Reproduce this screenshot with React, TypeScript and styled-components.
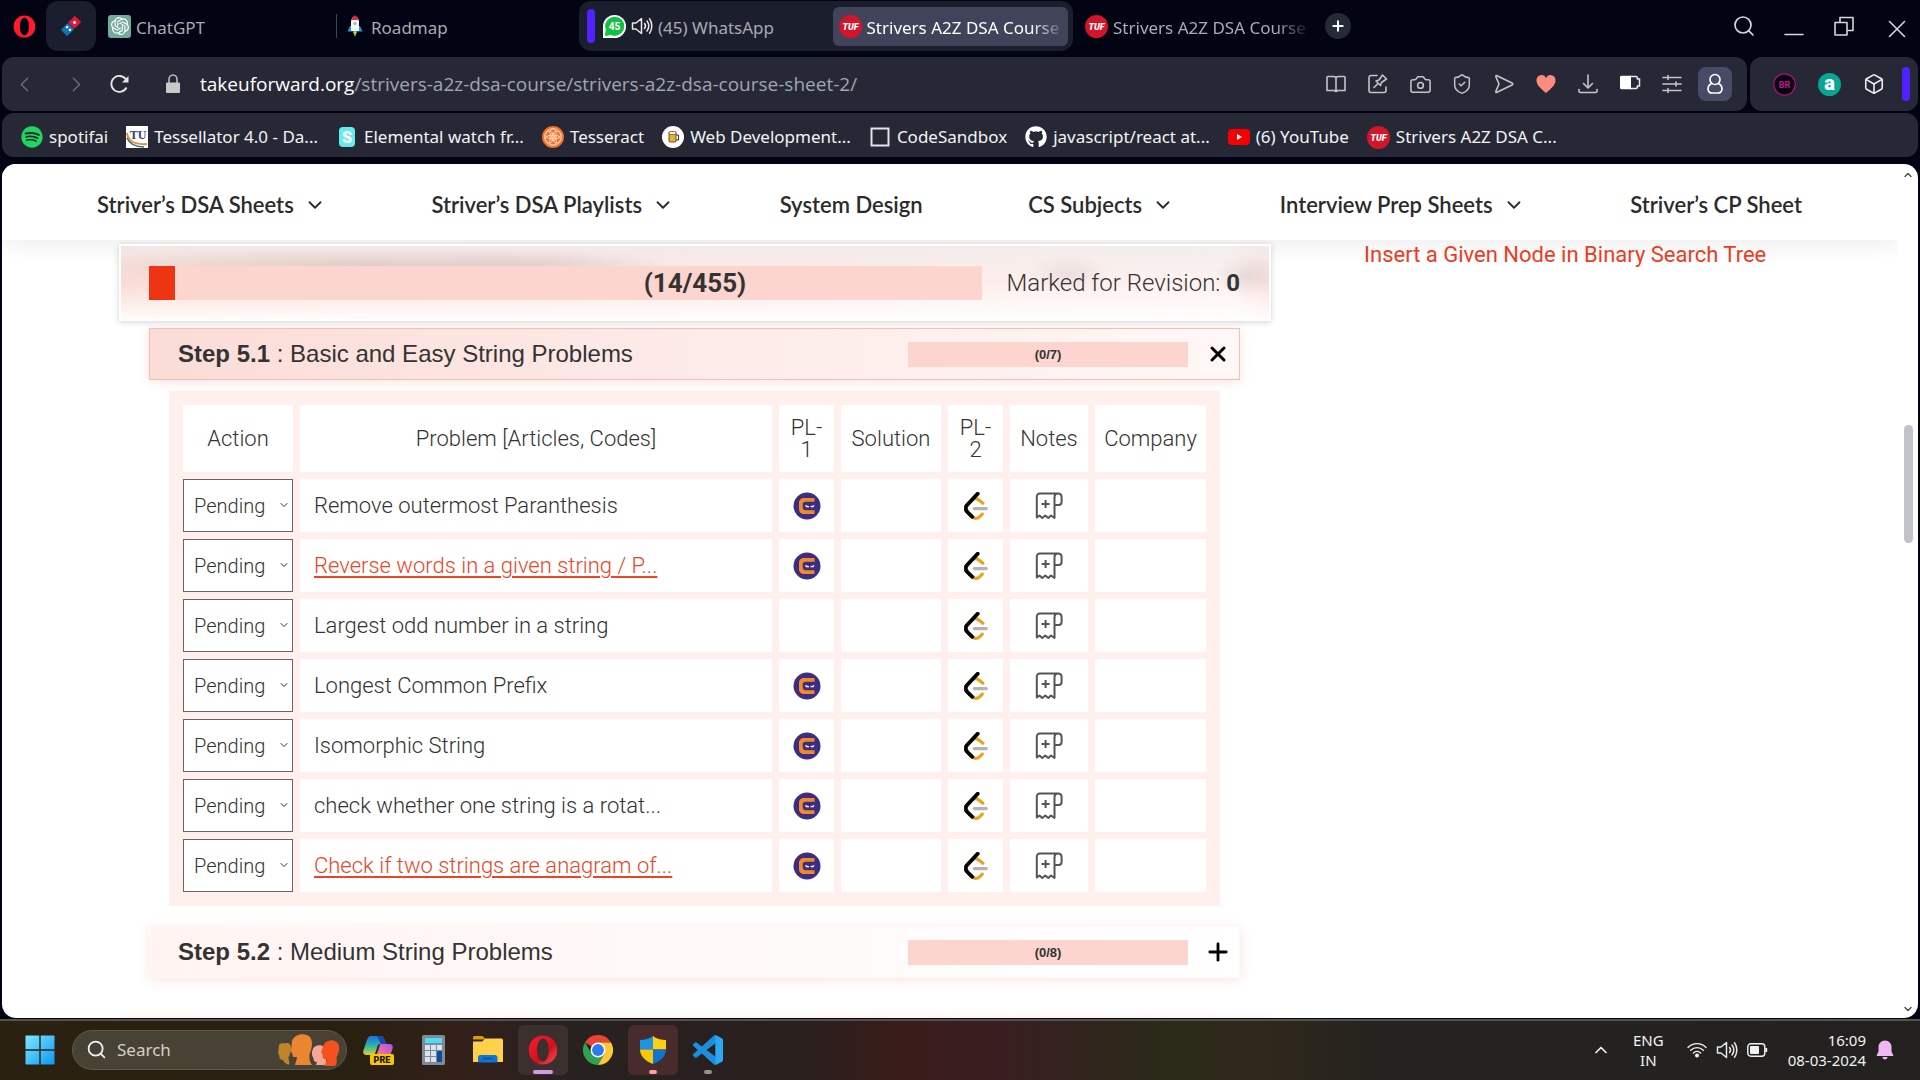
import React from "react";
import styled, { createGlobalStyle, css } from "styled-components";
import {
  Box,
  Camera,
  ChevronDown,
  ChevronLeft,
  ChevronRight,
  ChevronUp,
  Plus,
  Search,
  ShieldCheck,
  X,
} from "lucide-react";
import { FaGithub, FaSpotify } from "react-icons/fa";
import { SiOpenai } from "react-icons/si";

const ui = `"Noto Sans", "Open Sans", sans-serif`;
const body = `Roboto, "Noto Sans", sans-serif`;
const arial = `"Liberation Sans", Arial, sans-serif`;

const GlobalStyle = createGlobalStyle`
  * { box-sizing: border-box; }
  body { margin: 0; background: #020413; }
  button, input, select { font: inherit; color: inherit; margin: 0; }
  button { background: none; border: 0; padding: 0; }
  a { color: inherit; text-decoration: none; }
  svg { display: block; flex-shrink: 0; }
`;

const Desktop = styled.div`
  display: flex;
  flex-direction: column;
  height: 100vh;
  overflow: hidden;
  background: #020413;
  font-family: ${ui};
`;

/* ---------- tab strip ---------- */

const TabStrip = styled.header`
  display: flex;
  align-items: flex-start;
  height: 57px;
  padding-top: 1px;
  color: #a9abb2;
  font-size: 17px;
`;

const MenuButton = styled.button`
  display: grid;
  place-items: center;
  width: 46px;
  height: 50px;
  padding-left: 2px;
`;

const PinnedTab = styled.button`
  display: grid;
  place-items: center;
  width: 50px;
  height: 50px;
  margin-right: 1px;
  border-radius: 12px;
  background: #1b1e2c;
`;

const Tab = styled.button<{ $active?: boolean; $divided?: boolean; $tight?: boolean }>`
  position: relative;
  display: flex;
  flex: 0 1 236px;
  align-items: center;
  gap: 5px;
  min-width: 0;
  height: 50px;
  padding: 0 2px 0 ${(p) => (p.$tight ? "8px" : "11px")};
  ${(p) =>
    p.$active &&
    css`
      height: 39px;
      padding-left: 6px;
      border-radius: 6px;
      background: #40435a;
      color: #fff;
    `}
  ${(p) =>
    p.$divided &&
    css`
      &::before {
        content: "";
        position: absolute;
        left: 3px;
        top: 13px;
        width: 1px;
        height: 24px;
        background: #40434f;
      }
    `}
`;

const TabTitle = styled.span<{ $fade?: boolean }>`
  flex: 1;
  min-width: 0;
  padding-top: 3px;
  overflow: hidden;
  white-space: nowrap;
  text-align: left;
  line-height: 24px;
  ${(p) => p.$fade && css`mask-image: linear-gradient(to right, #000 82%, transparent);`}
`;

const TabGroup = styled.div`
  display: flex;
  flex: 0 1 494px;
  align-items: center;
  height: 50px;
  margin: 0 4px 0 10px;
  padding: 0 5px 0 8px;
  border-radius: 12px;
  background: #1b1e2c;

  ${Tab} { flex: 1 1 0; }
`;

const Accent = styled.span`
  width: 8px;
  height: 34px;
  border-radius: 4px;
  background: #4f22ff;
`;

const NewTab = styled.button`
  display: grid;
  place-items: center;
  width: 26px;
  height: 26px;
  margin: 12px 0 0 12px;
  border-radius: 50%;
  background: #262936;
  color: #fff;
`;

const WindowControls = styled.div`
  display: flex;
  gap: 26px;
  align-items: center;
  height: 50px;
  margin-left: auto;
  padding-right: 14px;
  color: #d5d6da;

  button { display: grid; place-items: center; width: 24px; height: 24px; }
`;

/* ---------- address bar ---------- */

const ToolRow = styled.div`
  display: flex;
  gap: 3px;
  padding: 0 2px;
`;

const ToolPanel = styled.div<{ $grow?: boolean }>`
  display: flex;
  flex: ${(p) => (p.$grow ? "1" : "none")};
  align-items: center;
  height: 54px;
  padding: ${(p) => (p.$grow ? "0 15px 0 10px" : "0 8px 0 23px")};
  gap: ${(p) => (p.$grow ? "0" : "22px")};
  border-radius: 12px;
  background: #262935;
  color: #c3c4ca;

  > ${Accent} { margin-left: -5px; }
`;

const NavIcons = styled.div`
  display: flex;
  align-items: center;
  gap: 27px;
  margin-right: 19px;
  color: #6a6d78;
`;

const LockSlot = styled.span`
  margin-left: 33px;
`;

const Address = styled.button`
  flex: 1;
  margin-left: 19px;
  text-align: left;
  font-family: "Open Sans", "Noto Sans", sans-serif;
  font-size: 19px;
  line-height: 28px;
  color: #a0a5b4;

  b { font-weight: 400; color: #fff; }
`;

const Tools = styled.div`
  display: flex;
  align-items: center;
  gap: 18px;
`;

const IconButton = styled.button<{ $lit?: boolean }>`
  display: grid;
  place-items: center;
  width: 24px;
  height: 34px;
  ${(p) =>
    p.$lit &&
    css`
      width: 34px;
      margin-left: -4px;
      border-radius: 8px;
      background: #484b66;
      color: #fff;
    `}
`;

const Bookmarks = styled.nav`
  display: flex;
  align-items: center;
  gap: 18px;
  height: 44px;
  margin: 2px 2px 7px;
  padding: 4px 19px 0;
  border-radius: 12px;
  background: #262935;
  color: #f3f3f5;
  font-size: 17px;
  line-height: 24px;
  white-space: nowrap;

  a { display: flex; align-items: center; gap: 6px; }
`;

/* ---------- page ---------- */

const Page = styled.div`
  display: flex;
  flex: 1;
  min-height: 0;
  margin: 0 2px 1px;
  border-radius: 14px;
  overflow: hidden;
  background: #fff;
  color: #333;
  font-family: ${body};
`;

const PageView = styled.div`
  flex: 1;
  min-width: 0;
  overflow: hidden;
`;

const SiteNav = styled.nav`
  display: flex;
  align-items: center;
  justify-content: space-between;
  height: 76px;
  padding: 6px 96px 0 95px;
  background: #fff;
  box-shadow: 0 4px 24px rgba(0, 0, 0, 0.08);
  font-family: Lato, sans-serif;
  font-size: 22px;
  font-weight: 600;
  line-height: 28px;
  color: #2b2b2b;
  white-space: nowrap;

  a { display: flex; align-items: center; gap: 10px; }
`;

const Columns = styled.div`
  display: grid;
  grid-template-columns: minmax(0, 1152fr) minmax(0, 409fr);
  gap: 93px;
  padding: 0 125px 0 117px;
`;

const Sheet = styled.main`
  min-width: 0;
`;

const Related = styled.aside`
  font-size: 22px;
  line-height: 30px;
  white-space: nowrap;
  color: #ee3b1d;
`;

const Progress = styled.section`
  position: relative;
  display: flex;
  align-items: center;
  gap: 25px;
  height: 77px;
  margin-top: 4px;
  padding: 0 29px 0 28px;
  border: 2px solid #fff;
  background:
    radial-gradient(300px 18px at 250px 20px, rgba(110, 80, 75, 0.16), transparent),
    radial-gradient(130px 16px at 420px 18px, rgba(110, 80, 75, 0.08), transparent),
    radial-gradient(40px 20px at 948px 28px, rgba(120, 90, 90, 0.1), transparent),
    radial-gradient(34px 22px at 1126px 30px, rgba(110, 100, 100, 0.14), transparent),
    linear-gradient(to bottom, rgba(240, 236, 236, 0.75), rgba(255, 255, 255, 0.1) 50%, rgba(255, 255, 255, 0.9)),
    linear-gradient(to right, #fbd6cf, #fbe6e2 50%, #fdf1ef 97%, #fadfda);
  box-shadow: 0 1px 6px rgba(0, 0, 0, 0.18);
  font-size: 24px;
  line-height: 34px;
  font-weight: 300;
  white-space: nowrap;

  b { font-weight: 700; }
`;

const ProgressTrack = styled.div`
  flex: 1;
  height: 34px;
  background: #fbd5ce;
`;

const ProgressFill = styled.div`
  height: 100%;
  background: #ed3514;
`;

const ProgressCount = styled.b`
  position: absolute;
  inset: 0;
  display: grid;
  place-items: center;
  font-size: 26px;
`;

const Step = styled.section<{ $open?: boolean }>`
  display: flex;
  align-items: center;
  height: 52px;
  margin: ${(p) => (p.$open ? "7px 31px 0 30px" : "20px 31px 0 30px")};
  padding: 0 7px 0 28px;
  border: 1px solid ${(p) => (p.$open ? "#f8bdb3" : "#fffafa")};
  background: ${(p) =>
    p.$open
      ? "linear-gradient(to right, #fbdcd7, #fdebe8 50%, #fff7f6)"
      : "linear-gradient(to right, #fff4f2, #fffafa 60%, #fff)"};
  box-shadow: 0 2px 10px rgba(240, 90, 60, 0.16);
  font-family: ${arial};
`;

const StepTitle = styled.h2`
  flex: 1;
  margin: 0;
  font-size: 24px;
  line-height: 32px;
  font-weight: 400;
`;

const StepBar = styled.div`
  width: 280px;
  height: 25px;
  margin-right: 16px;
  background: #fbd5ce;
  text-align: center;
  font-size: 13px;
  line-height: 25px;
  font-weight: 700;
`;

const Toggle = styled.button`
  display: grid;
  place-items: center;
  width: 28px;
  height: 28px;
  color: #000;
`;

const TableWrap = styled.div`
  margin: 11px 51px 0 50px;
  padding: 7px;
  background: #fff0ed;
`;

const Table = styled.table`
  width: 100%;
  table-layout: fixed;
  border-collapse: separate;
  border-spacing: 7px;
  font-size: 22px;
  line-height: 22px;
  font-weight: 300;

  th, td { padding: 0; background: #fff; font-weight: 300; }
  th { height: 67px; padding: 0 8px; }
  td { height: 53px; }
  td > svg { margin: 0 auto; }
`;

const Col = styled.col<{ $w?: number }>`
  width: ${(p) => (p.$w ? `${p.$w}px` : "auto")};
`;

const SelectBox = styled.label`
  position: relative;
  display: block;

  select {
    display: block;
    width: 100%;
    height: 53px;
    padding: 0 10px;
    border: 1px solid #666;
    border-radius: 0;
    background: #fff;
    appearance: none;
    font-size: 20px;
  }
  svg { position: absolute; right: 3px; top: 20px; pointer-events: none; }
`;

const Problem = styled.div`
  padding: 0 14px;
  overflow: hidden;
  white-space: nowrap;
  line-height: 30px;

  a {
    color: #ee4426;
    text-decoration: underline;
    text-decoration-thickness: 2px;
    text-underline-offset: 3px;
  }
`;

const NextCard = styled.div`
  height: 40px;
  margin-top: 39px;
  background: #fff8f7;
  box-shadow: 0 0 8px rgba(240, 90, 60, 0.12);
`;

const Scrollbar = styled.div`
  display: flex;
  flex-direction: column;
  align-items: center;
  width: 20px;
  padding: 5px 0 3px;
  color: #555;
`;

const Space = styled.div<{ $grow: number }>`
  flex: ${(p) => p.$grow};
`;

const Thumb = styled.div`
  flex: 118;
  width: 9px;
  border-radius: 5px;
  background: #c1c2cb;
`;

/* ---------- taskbar ---------- */

const Taskbar = styled.footer`
  display: flex;
  align-items: center;
  height: 61px;
  border-top: 2px solid #55534f;
  padding: 0 26px 2px 21px;
  background: linear-gradient(
    to right,
    #2a2110 0%, #2a2012 19%, #33201a 24%, #272120 30%, #2a201e 42%,
    #3a1c19 47%, #391e21 52%, #2f261c 58%, #2a2b18 61%, #30281b 65%, #25231f 72%, #222120 100%
  );
  color: #f2f2f2;
  flex-shrink: 0;
`;

const StartButton = styled.button`
  display: grid;
  place-items: center;
  width: 37px;
  height: 50px;
`;

const SearchBox = styled.label`
  display: flex;
  align-items: center;
  width: 275px;
  height: 40px;
  margin: 0 6px 0 14px;
  padding: 0 5px 0 13px;
  border: 1px solid #5d584a;
  border-radius: 20px;
  background: #484234;

  input {
    flex: 1;
    min-width: 0;
    margin-left: 10px;
    padding: 0;
    border: 0;
    outline: 0;
    background: none;
    font-size: 17px;
  }
  input::placeholder { color: #d3d0c8; opacity: 1; }
`;

const AppButton = styled.button<{ $bg?: string; $mark?: string; $wide?: boolean }>`
  position: relative;
  display: grid;
  place-items: center;
  width: 50px;
  height: 50px;
  margin-right: 5px;
  border-radius: 6px;
  background: ${(p) => p.$bg || "transparent"};

  ${(p) =>
    p.$mark &&
    css`
      &::after {
        content: "";
        position: absolute;
        bottom: 1px;
        left: calc(50% - ${p.$wide ? 10 : 4}px);
        width: ${p.$wide ? 20 : 8}px;
        height: 4px;
        border-radius: 2px;
        background: ${p.$mark};
      }
    `}
`;

const Tray = styled.div`
  display: flex;
  align-items: center;
  margin-left: auto;
  font-size: 15px;
  line-height: 20px;
`;

const TrayText = styled.div<{ $right?: boolean }>`
  text-align: ${(p) => (p.$right ? "right" : "center")};
  white-space: pre-line;
`;

const Lang = styled.div`
  margin-left: 22px;
`;

const BellSlot = styled.span`
  margin-left: 10px;
`;

const TrayIcons = styled.div`
  display: flex;
  gap: 9px;
  align-items: center;
  margin: 0 20px 0 23px;
`;

/* ---------- drawings ---------- */

const OperaLogo = ({ size, dark }: { size: number; dark?: boolean }) => (
  <svg width={size} height={size} viewBox="0 0 30 30" aria-hidden="true">
    <defs>
      <linearGradient id="opera" x1="0" y1="0" x2="1" y2="1">
        <stop offset="0" stopColor="#ff1b2d" />
        <stop offset="0.6" stopColor="#d0101f" />
        <stop offset="1" stopColor="#ff5a50" />
      </linearGradient>
    </defs>
    <path
      fillRule="evenodd"
      fill={dark ? "url(#opera)" : "#ff1b2d"}
      d="M15 0.5C6.8 0.5 0.8 7 0.8 15S6.8 29.500 15 29.500 29.200 23 29.200 15 23.200 0.500 15 0.500ZM15 3.500C18.500 3.500 20.800 8.500 20.800 15S18.500 26.500 15 26.500 9 21.500 9 15 11.500 3.500 15 3.500Z"
    />
  </svg>
);

const Dominos = () => (
  <svg width="20" height="20" viewBox="0 0 20 20" aria-hidden="true">
    <g transform="rotate(45 10 10)">
      <rect x="5.500" y="0" width="9" height="9.500" rx="1" fill="#e31837" />
      <rect x="5.500" y="10" width="9" height="10" rx="1" fill="#1272b6" />
      <circle cx="10" cy="5" r="1.500" fill="#fff" />
      <circle cx="8" cy="13.500" r="1.300" fill="#fff" />
      <circle cx="12" cy="13.500" r="1.300" fill="#fff" />
    </g>
  </svg>
);

const GptTile = styled.span`
  display: grid;
  place-items: center;
  width: 23px;
  height: 23px;
  border-radius: 3px;
  background: #75a99c;
  color: #fff;
`;

const Rocket = () => (
  <svg width="22" height="22" viewBox="0 0 22 22" aria-hidden="true">
    <path d="M6 11 3.500 16.500H18.500L16 11Z" fill="#2b8fe0" />
    <path d="M7 16V7C7 4 9 1.500 11 1.500S15 4 15 7V16Z" fill="#f4f5f8" />
    <path d="M7.800 5C8.500 2.500 9.600 0.500 11 0.500S13.500 2.500 14.200 5Z" fill="#e5243b" />
    <circle cx="11" cy="8.500" r="1.600" fill="#9eb4c8" />
    <path d="M8.800 16.500H13.200L11 22Z" fill="#6fce2e" />
    <path d="M9.800 16.500H12.200L11 19.500Z" fill="#f5d42b" />
  </svg>
);

const WhatsApp = () => (
  <svg width="23" height="23" viewBox="0 0 23 23" aria-hidden="true">
    <path d="M0 11.500A11.500 11.500 0 1 1 11.500 23H0Z" fill="#fff" />
    <circle cx="11.700" cy="11.300" r="9.600" fill="#12c143" />
    <path d="M2.500 15 2 21 8 20Z" fill="#12c143" />
    <text x="11.500" y="15" textAnchor="middle" fontFamily="Roboto, sans-serif" fontSize="10" fontWeight="700" fill="#fff">
      45
    </text>
  </svg>
);

const Speaker = ({ size = 22 }: { size?: number }) => (
  <svg width={size} height={size} viewBox="0 0 22 22" fill="none" stroke="#e8e8ea" strokeWidth="1.500" strokeLinejoin="round" strokeLinecap="round" aria-hidden="true">
    <path d="M1.500 8V14H5L10.500 18.500V3.500L5 8Z" />
    <path d="M13.500 8.500C14.800 10 14.800 12 13.500 13.500M16 6C18.200 9 18.200 13 16 16M18.500 3.800C21.600 8 21.600 14 18.500 18.200" />
  </svg>
);

const TufBadge = () => (
  <svg width="23" height="23" viewBox="0 0 23 23" aria-hidden="true">
    <circle cx="11.500" cy="11.500" r="11.500" fill="#d2152b" />
    <text x="11.500" y="14.500" textAnchor="middle" fontFamily="Roboto, sans-serif" fontSize="9" fontWeight="900" fontStyle="italic" fill="#fff">
      TUF
    </text>
  </svg>
);

const stroke = {
  fill: "none",
  stroke: "currentColor",
  strokeWidth: 1.6,
  strokeLinecap: "round" as const,
  strokeLinejoin: "round" as const,
};

const Glyph = ({ d, children }: { d?: string; children?: React.ReactNode }) => (
  <svg width="22" height="22" viewBox="0 0 22 22" {...stroke} aria-hidden="true">
    {d && <path d={d} />}
    {children}
  </svg>
);

const Lock = () => (
  <svg width="16" height="20" viewBox="0 0 16 20" aria-hidden="true">
    <path d="M4 9V5.500A4 4.500 0 0 1 12 5.500V9" fill="none" stroke="#bdbdbf" strokeWidth="1.600" />
    <rect x="1" y="8.500" width="14" height="10.500" rx="1" fill="#c9c9c9" />
  </svg>
);

const Heart = () => (
  <svg width="20" height="18" viewBox="0 0 20 18" fill="#ff8a80" aria-hidden="true">
    <path d="M10 18C6 14.500 0.500 10.500 0.500 5.500A5 5.200 0 0 1 10 3 5 5.200 0 0 1 19.500 5.500C19.500 10.500 14 14.500 10 18Z" />
  </svg>
);

const Saver = () => (
  <svg width="22" height="22" viewBox="0 0 22 22" aria-hidden="true">
    <path d="M11 3.500H17C18 3.500 18.500 5 18.500 6H20.500V13H18.500C18.500 14 18 15.500 17 15.500H11" fill="none" stroke="#e8e8ea" strokeWidth="1.500" />
    <path d="M1 4A1.500 1.500 0 0 1 2.500 2.700H12V16.200H2.500A1.500 1.500 0 0 1 1 15Z" fill="#fff" />
  </svg>
);

const Ninja = () => (
  <svg width="28" height="28" viewBox="0 0 28 28" role="img" aria-label="Coding Ninjas">
    <circle cx="14" cy="14" r="13.500" fill="#3d2c82" />
    <path d="M21.500 6H11C7.500 6 6 8.500 6 11V17C6 19.500 7.500 22 11 22H21.500V18.200H12.500C10.500 18.200 9.700 17 9.700 15V12.500C9.700 10.700 10.800 9.800 12.500 9.800H21.500Z" fill="#ef8a26" />
    <path d="M12 13 16 14.200V15.200H13ZM21.500 13 17.500 14.200V15.200H20.500Z" fill="#fff" />
  </svg>
);

const LeetCode = () => (
  <svg width="24" height="28" viewBox="0 0 95 111" role="img" aria-label="LeetCode">
    <path d="M68.0063 83.0664C70.5 80.5764 74.5366 80.5829 77.0223 83.0809C79.508 85.579 79.5015 89.6226 77.0078 92.1127L65.9346 103.17C55.7187 113.371 39.06 113.519 28.6718 103.513C28.6117 103.456 23.9861 98.9201 8.72653 83.957C-1.42528 74.0029 -2.43665 58.0749 7.11648 47.8464L24.9282 28.7745C34.4095 18.6219 51.887 17.5122 62.7275 26.2789L78.9048 39.362C81.6444 41.5776 82.0723 45.5985 79.8606 48.3429C77.6488 51.0873 73.635 51.5159 70.8954 49.3003L54.7182 36.2173C49.0488 31.6325 39.1314 32.2622 34.2394 37.5006L16.4274 56.5727C11.7767 61.5522 12.2861 69.574 17.6456 74.8292C28.851 85.8169 37.4869 94.2846 37.4969 94.2942C42.8977 99.496 51.6304 99.4184 56.9331 94.1234L68.0063 83.0664Z" fill="#eba21d" />
    <path d="M41.1067 72.0014C37.5858 72.0014 34.7314 69.1421 34.7314 65.615C34.7314 62.0879 37.5858 59.2286 41.1067 59.2286H88.1245C91.6454 59.2286 94.4997 62.0879 94.4997 65.615C94.4997 69.1421 91.6454 72.0014 88.1245 72.0014H41.1067Z" fill="#b3b3b3" />
    <path d="M49.9118 2.02335C52.3173 -0.55232 56.3517 -0.686894 58.9228 1.72277C61.494 4.13244 61.6284 8.17385 59.2229 10.7495L16.4276 56.5729C11.7768 61.552 12.2861 69.5738 17.6453 74.8292L37.4088 94.2091C39.9249 96.6764 39.968 100.72 37.505 103.24C35.042 105.761 31.0056 105.804 28.4895 103.337L8.72593 83.9567C-1.42529 74.0021 -2.43665 58.0741 7.1169 47.8463L49.9118 2.02335Z" fill="#000" stroke="#000" strokeWidth="3" />
  </svg>
);

const Notes = () => (
  <svg width="28" height="28" viewBox="0 0 28 28" fill="none" stroke="#555" strokeWidth="2" strokeLinejoin="round" role="img" aria-label="Notes">
    <path d="M23 1.500H5C3 1.500 1.800 2.800 1.800 5V25.500L4.500 23.500 7.200 26 10.300 23.500 13.300 26 16 23.500 19.500 26V5C19.500 3 20.500 1.500 23 1.500C25.200 1.500 26.600 3 26.600 5V10C26.600 12 25.500 13 23.500 13H19.500" />
    <path d="M10.600 8V16M6.600 12H14.600" />
  </svg>
);

const WindowsLogo = () => (
  <svg width="30" height="30" viewBox="0 0 30 30" aria-hidden="true">
    <defs>
      <linearGradient id="win" x1="0" y1="0" x2="1" y2="1">
        <stop offset="0" stopColor="#7deaff" />
        <stop offset="1" stopColor="#0c96f5" />
      </linearGradient>
    </defs>
    <path fill="url(#win)" d="M1 0.500H14.300V14.300H0.500V1ZM15.700 0.500H29L29.500 1V14.300H15.700ZM0.500 15.700H14.300V29.500H1L0.500 29ZM15.700 15.700H29.500V29L29 29.500H15.700Z" />
  </svg>
);

const Faces = () => (
  <svg width="64" height="32" viewBox="0 0 64 32" aria-hidden="true">
    <path d="M2 11C3 9 6 9 8 9.500C11 8 14 10 14 14C14 18 13 21 11.500 23C11.500 26 13 29 12 30.500C9 31 7 28 6 26L4 25.500C2 25 3 23 2 21C0.500 20 1.500 18 1.500 16Z" fill="#bf852d" />
    <path d="M40 28C36 28 37 25 36 23C34 21 35 14 38 12.500C43 9.500 49 12 49.500 17C49.500 22 48 25 50 31H39Z" fill="#f5a899" />
    <path d="M18 31C19 27 20 25 20 23H17C15 23 16 20 15 19L13.500 17C15 14 14 11 15 7C17 0 28-2 33 3C37 9 34 17 32.500 20C32 25 33 28 35 31Z" fill="#ea8530" />
    <path d="M47 32C49 29 50 27 49.500 25H47C45 24 46 21 45.500 20L44 18C46 15 45 12 48 9C53 4 61 6 62 12C63 18 60 21 59.500 24C60 28 60 30 58 32Z" fill="#f4511e" />
  </svg>
);

const Copilot = () => (
  <svg width="32" height="30" viewBox="0 0 32 30" aria-hidden="true">
    <defs>
      <linearGradient id="cpA" x1="0" y1="0" x2="0" y2="1">
        <stop offset="0" stopColor="#1f6fe5" />
        <stop offset="0.500" stopColor="#27b3a8" />
        <stop offset="1" stopColor="#d8d32e" />
      </linearGradient>
      <linearGradient id="cpB" x1="1" y1="0" x2="0" y2="1">
        <stop offset="0" stopColor="#9a5cf0" />
        <stop offset="0.600" stopColor="#ee6aa0" />
        <stop offset="1" stopColor="#ff9a56" />
      </linearGradient>
    </defs>
    <path d="M9 1H19C21 1 22 3 23 6L24 9H19C16 9 15.500 11 15 13L12.500 20H5C2 20 0.500 18 1.500 15L5 5C6 2 7 1 9 1Z" fill="url(#cpA)" />
    <path d="M13 1H19C21 1 22 3 23 6L24 9H19L16.500 4C16 2 15 1 13 1Z" fill="#1a44b8" />
    <path d="M19 9H27C30 9 31.500 11 30.500 14L28 21C27 24 25 24 23 24H13L17 13C17.500 11 18 9 19 9Z" fill="url(#cpB)" />
    <rect x="8" y="19" width="24" height="11" rx="2" fill="#fbc503" />
    <text x="20" y="28" textAnchor="middle" fontFamily="Roboto, sans-serif" fontSize="9" fontWeight="900" fill="#1a1a1a">
      PRE
    </text>
  </svg>
);

const Calculator = () => (
  <svg width="23" height="30" viewBox="0 0 23 30" aria-hidden="true">
    <rect width="23" height="30" rx="1.500" fill="#7f8a96" />
    <rect x="3" y="3" width="17" height="5" fill="#4cdcf5" />
    {[10, 16, 22].map((y) =>
      [3, 9, 15].map((x) => (
        <rect
          key={`${x}-${y}`}
          x={x}
          y={y}
          width="5"
          height={x === 15 && y === 16 ? 11 : 5}
          fill={x === 15 && y > 10 ? "#124c96" : "#dbe2ea"}
        />
      ))
    )}
  </svg>
);

const Folder = () => (
  <svg width="30" height="27" viewBox="0 0 30 27" aria-hidden="true">
    <path d="M0 1.500A1.500 1.500 0 0 1 1.500 0H9.500L13 3.500H0Z" fill="#d99b08" />
    <path d="M0 5.500H9L12.500 2.500H28.500A1.500 1.500 0 0 1 30 4V26H0Z" fill="#ffd04a" />
    <path d="M5 26.500V21.500A2.500 2.500 0 0 1 7.500 19H22A2.500 2.500 0 0 1 24.500 21.500V26.500Z" fill="#0f74d2" />
    <path d="M10 22.500H20" stroke="#0a4f9c" strokeWidth="1.500" />
  </svg>
);

const Chrome = () => (
  <svg width="30" height="30" viewBox="0 0 48 48" aria-hidden="true">
    <path d="M24 24 3.200 12A24 24 0 0 1 44.800 12H24Z" fill="#ea4335" />
    <path d="M3.200 12A24 24 0 0 0 24 48L34.400 30 24 24 13.600 30Z" fill="#2fa152" />
    <path d="M44.800 12A24 24 0 0 1 24 48L34.400 30 24 12Z" fill="#fcc934" />
    <circle cx="24" cy="24" r="12" fill="#fff" />
    <circle cx="24" cy="24" r="9.500" fill="#2b7cf0" />
  </svg>
);

const Defender = () => (
  <svg width="26" height="28" viewBox="0 0 26 28" aria-hidden="true">
    <path d="M13 0C10 2.500 5 4 0 4V13.500H13Z" fill="#1b95e6" />
    <path d="M13 0C16 2.500 21 4 26 4V13.500H13Z" fill="#ffcf10" />
    <path d="M0 13.500C0 20 5 25 13 28V13.500Z" fill="#f7c80c" />
    <path d="M26 13.500C26 20 21 25 13 28V13.500Z" fill="#0d74cf" />
  </svg>
);

const VsCode = () => (
  <svg width="30" height="30" viewBox="0 0 24 24" fill="#1c8ede" aria-hidden="true">
    <path d="M23.15 2.587L18.21.21a1.494 1.494 0 0 0-1.705.29l-9.46 8.63-4.12-3.128a.999.999 0 0 0-1.276.057L.327 7.261A1 1 0 0 0 .326 8.74L3.899 12 .326 15.26a1 1 0 0 0 .001 1.479L1.65 17.94a.999.999 0 0 0 1.276.057l4.12-3.128 9.46 8.63a1.492 1.492 0 0 0 1.704.29l4.942-2.377A1.5 1.5 0 0 0 24 20.06V3.939a1.5 1.5 0 0 0-.85-1.352zm-5.146 14.861L10.826 12l7.178-5.448v10.896z" />
    <path d="M18 .3 19.500.8 24 3.500V20.500L19 23.500 18 23Z" fill="#2ba8f4" />
  </svg>
);

const Wifi = () => (
  <svg width="20" height="16" viewBox="0 0 20 16" fill="none" stroke="#f2f2f2" strokeWidth="1.400" strokeLinecap="round" aria-hidden="true">
    <path d="M1 5.500C6 0.300 14 0.300 19 5.500M3.700 8.300C7.300 4.700 12.700 4.700 16.300 8.300M6.400 11C8.500 9 11.500 9 13.600 11" />
    <circle cx="10" cy="13.500" r="1.300" fill="#f2f2f2" />
  </svg>
);

const Battery = () => (
  <svg width="21" height="14" viewBox="0 0 21 14" aria-hidden="true">
    <rect x="0.800" y="0.800" width="17" height="12.400" rx="3" fill="none" stroke="#f2f2f2" strokeWidth="1.400" />
    <rect x="3" y="3" width="9" height="8" rx="1" fill="#f2f2f2" />
    <path d="M19.200 5V9" stroke="#f2f2f2" strokeWidth="2" />
  </svg>
);

const Bell = () => (
  <svg width="18" height="20" viewBox="0 0 18 20" fill="#efb8f0" aria-hidden="true">
    <path d="M9 0.500C5 0.500 2.500 3.500 2.500 7V11.500L0.800 15V16H17.200V15L15.500 11.500V7C15.500 3.500 13 0.500 9 0.500ZM6.500 17H11.500C11.500 18.500 10.500 19.500 9 19.500S6.500 18.500 6.500 17Z" />
  </svg>
);

const Tessellator = () => (
  <svg width="22" height="22" viewBox="0 0 22 22" aria-hidden="true">
    <rect width="22" height="22" fill="#fff" />
    <text x="12" y="13" textAnchor="middle" fontFamily="Liberation Serif, serif" fontSize="12" fontWeight="700" fill="#3a3a86">
      TU
    </text>
    <path d="M1 7C2 15 8 19 21 18" fill="none" stroke="#f08a3c" strokeWidth="2" />
    <path d="M1 12C4 19 10 21 18 21" fill="none" stroke="#2b6f80" strokeWidth="1.500" />
  </svg>
);

const SLogo = () => (
  <svg width="22" height="22" viewBox="0 0 22 22" aria-hidden="true">
    <rect x="3" y="1" width="16" height="20" rx="4" fill="#62ecec" />
    <text x="11" y="17" textAnchor="middle" fontFamily="Roboto, sans-serif" fontSize="17" fontWeight="900" fill="#fff">
      S
    </text>
  </svg>
);

const TesseractLogo = () => (
  <svg width="22" height="22" viewBox="0 0 22 22" aria-hidden="true">
    <circle cx="11" cy="11" r="11" fill="#f2702a" />
    <g fill="none" stroke="#fbd3b8" strokeWidth="0.900">
      <circle cx="11" cy="11" r="8.500" />
      <circle cx="11" cy="11" r="3.500" />
      {[0, 60, 120, 180, 240, 300].map((a) => (
        <circle key={a} cx="11" cy="6.500" r="3.500" transform={`rotate(${a} 11 11)`} />
      ))}
    </g>
  </svg>
);

const BeerLogo = () => (
  <svg width="22" height="22" viewBox="0 0 22 22" aria-hidden="true">
    <circle cx="11" cy="11" r="11" fill="#fff" />
    <path d="M14 9H16.500V14H14" fill="none" stroke="#333" strokeWidth="1" />
    <rect x="7" y="6" width="7" height="10" rx="1" fill="#f2b02a" stroke="#333" strokeWidth="0.800" />
    <rect x="7" y="5.500" width="7" height="3" rx="1.500" fill="#fff7df" stroke="#333" strokeWidth="0.600" />
  </svg>
);

const SandboxLogo = () => (
  <svg width="22" height="22" viewBox="0 0 22 22" aria-hidden="true">
    <rect x="2.500" y="2.500" width="17" height="17" fill="none" stroke="#e4e4e6" strokeWidth="2" />
  </svg>
);

const YouTubeLogo = () => (
  <svg width="22" height="22" viewBox="0 0 22 22" aria-hidden="true">
    <rect y="3" width="22" height="16" rx="4" fill="#f60002" />
    <path d="M9 8V14L14 11Z" fill="#fff" />
  </svg>
);

/* ---------- data ---------- */

const bookmarks: [React.ReactNode, string][] = [
  [<FaSpotify size={22} color="#1ed760" />, "spotifai"],
  [<Tessellator />, "Tessellator 4.0 - Da..."],
  [<SLogo />, "Elemental watch fr..."],
  [<TesseractLogo />, "Tesseract"],
  [<BeerLogo />, "Web Development..."],
  [<SandboxLogo />, "CodeSandbox"],
  [<FaGithub size={22} color="#fff" />, "javascript/react at..."],
  [<YouTubeLogo />, "(6) YouTube"],
  [<TufBadge />, "Strivers A2Z DSA C..."],
];

const siteLinks: [string, boolean][] = [
  ["Striver’s DSA Sheets", true],
  ["Striver’s DSA Playlists", true],
  ["System Design", false],
  ["CS Subjects", true],
  ["Interview Prep Sheets", true],
  ["Striver’s CP Sheet", false],
];

const problems = [
  { name: "Remove outermost Paranthesis", ninja: true },
  { name: "Reverse words in a given string / P...", ninja: true, link: true },
  { name: "Largest odd number in a string", ninja: false },
  { name: "Longest Common Prefix", ninja: true },
  { name: "Isomorphic String", ninja: true },
  { name: "check whether one string is a rotat...", ninja: true },
  { name: "Check if two strings are anagram of...", ninja: true, link: true },
];

const done = 14;
const total = 455;

export default function App() {
  return (
    <Desktop>
      <GlobalStyle />
      <TabStrip>
        <MenuButton aria-label="Opera menu"><OperaLogo size={23} /></MenuButton>
        <PinnedTab aria-label="Pinned tab"><Dominos /></PinnedTab>
        <Tab>
          <GptTile><SiOpenai size={18} /></GptTile>
          <TabTitle>ChatGPT</TabTitle>
        </Tab>
        <Tab $divided>
          <Rocket />
          <TabTitle>Roadmap</TabTitle>
        </Tab>
        <TabGroup>
          <Accent />
          <Tab $tight>
            <WhatsApp />
            <Speaker />
            <TabTitle>(45) WhatsApp</TabTitle>
          </Tab>
          <Tab $active>
            <TufBadge />
            <TabTitle $fade>Strivers A2Z DSA Course</TabTitle>
          </Tab>
        </TabGroup>
        <Tab $tight>
          <TufBadge />
          <TabTitle $fade>Strivers A2Z DSA Course</TabTitle>
        </Tab>
        <NewTab aria-label="New tab"><Plus size={16} strokeWidth={3} /></NewTab>
        <WindowControls>
          <button aria-label="Search tabs"><Search size={24} strokeWidth={1.7} /></button>
          <button aria-label="Minimise">
            <Glyph d="M2 19.500H20" />
          </button>
          <button aria-label="Restore">
            <Glyph d="M2 7.500H14V20H2ZM7 7.500V2.500H20V15.500H14" />
          </button>
          <button aria-label="Close"><X size={30} strokeWidth={1.3} /></button>
        </WindowControls>
      </TabStrip>

      <ToolRow>
        <ToolPanel $grow>
          <NavIcons>
            <ChevronLeft size={25} strokeWidth={1.4} />
            <ChevronRight size={25} strokeWidth={1.4} />
          </NavIcons>
          <IconButton aria-label="Reload">
            <svg width="20" height="20" viewBox="0 0 20 20" fill="none" stroke="#e6e6e8" strokeWidth="1.800" aria-hidden="true">
              <path d="M16.500 13.500A8 8 0 1 1 16 5.500" />
              <path d="M18.500 2V8.500H12Z" fill="#e6e6e8" stroke="none" />
            </svg>
          </IconButton>
          <LockSlot><Lock /></LockSlot>
          <Address>
            <b>takeuforward.org</b>/strivers-a2z-dsa-course/strivers-a2z-dsa-course-sheet-2/
          </Address>
          <Tools>
            <IconButton aria-label="Reader">
              <Glyph d="M11 4.500V18.500M3 3.500H9L11 4.500 13 3.500H19A1 1 0 0 1 20 4.500V17.500H13L11 18.500 9 17.500H2V4.500A1 1 0 0 1 3 3.500Z" />
            </IconButton>
            <IconButton aria-label="Edit">
              <Glyph d="M10 2.500H4A2 2 0 0 0 2 4.500V17.500A2 2 0 0 0 4 19.500H17A2 2 0 0 0 19 17.500V14M7 14.500 11 10.500M9 8 13.500 12.500 14.500 9.500 19.500 6 15.500 2 12 7Z" />
            </IconButton>
            <IconButton aria-label="Snapshot"><Camera size={23} strokeWidth={1.6} /></IconButton>
            <IconButton aria-label="Protection"><ShieldCheck size={22} strokeWidth={1.6} /></IconButton>
            <IconButton aria-label="Flow">
              <Glyph d="M3.500 2.500 19 10Q20.500 11 19 12L3.500 19.500Q2.500 19.500 3 18L6 11 3 4Q2.500 2.500 3.500 2.500Z" />
            </IconButton>
            <IconButton aria-label="Favourite"><Heart /></IconButton>
            <IconButton aria-label="Downloads">
              <Glyph d="M11 2V14.500M6.500 10.500 11 15 15.500 10.500M2 16.500V18A1.500 1.500 0 0 0 3.500 19.500H18.500A1.500 1.500 0 0 0 20 18V16.500" />
            </IconButton>
            <IconButton aria-label="Battery saver"><Saver /></IconButton>
            <IconButton aria-label="Easy setup">
              <Glyph d="M2 4.500H20M2 11H20M2 17.500H20M7 2.500V6.500M15 9V13M7 15.500V19.500" />
            </IconButton>
            <IconButton $lit aria-label="Profile">
              <Glyph>
                <circle cx="11" cy="6.500" r="5" />
                <path d="M7.500 10.500C4.500 12 3.500 15 4.500 18C5 19.500 6 20 8 20H14C16 20 17 19.500 17.500 18C18.500 15 17.500 12 14.500 10.500" />
              </Glyph>
            </IconButton>
          </Tools>
        </ToolPanel>
        <ToolPanel>
          <svg width="23" height="23" viewBox="0 0 23 23" aria-hidden="true">
            <circle cx="11.500" cy="11.500" r="10.700" fill="#050410" stroke="#b0107c" strokeWidth="1.200" />
            <text x="11.500" y="15" textAnchor="middle" fontFamily="Roboto, sans-serif" fontSize="9" fontWeight="700" fill="#c4148a">BR</text>
          </svg>
          <svg width="23" height="23" viewBox="0 0 23 23" aria-hidden="true">
            <circle cx="11.500" cy="11.500" r="11.500" fill="#0aa594" />
            <text x="11.500" y="17" textAnchor="middle" fontFamily="Roboto, sans-serif" fontSize="20" fontWeight="900" fill="#fff">a</text>
          </svg>
          <Box size={22} strokeWidth={1.7} color="#f0f0f2" />
          <Accent />
        </ToolPanel>
      </ToolRow>

      <Bookmarks aria-label="Bookmarks">
        {bookmarks.map(([icon, label]) => (
          <a href="#" key={label}>{icon}<span>{label}</span></a>
        ))}
      </Bookmarks>

      <Page>
        <PageView>
          <SiteNav>
            {siteLinks.map(([label, menu]) => (
              <a href="#" key={label}>
                {label}
                {menu && <ChevronDown size={22} strokeWidth={2} />}
              </a>
            ))}
          </SiteNav>
          <Columns>
            <Sheet>
              <Progress>
                <ProgressTrack>
                  <ProgressFill style={{ width: `${(done / total) * 100}%` }} />
                </ProgressTrack>
                <ProgressCount>({done}/{total})</ProgressCount>
                <span>Marked for Revision: <b>0</b></span>
              </Progress>

              <Step $open>
                <StepTitle><b>Step 5.1</b> : Basic and Easy String Problems</StepTitle>
                <StepBar>(0/7)</StepBar>
                <Toggle aria-label="Collapse step 5.1"><X size={24} strokeWidth={3} /></Toggle>
              </Step>
              <TableWrap>
                <Table>
                  <colgroup>
                    <Col $w={110} />
                    <Col />
                    <Col $w={55} />
                    <Col $w={100} />
                    <Col $w={55} />
                    <Col $w={78} />
                    <Col $w={111} />
                  </colgroup>
                  <thead>
                    <tr>
                      <th>Action</th>
                      <th>Problem [Articles, Codes]</th>
                      <th>PL-1</th>
                      <th>Solution</th>
                      <th>PL-2</th>
                      <th>Notes</th>
                      <th>Company</th>
                    </tr>
                  </thead>
                  <tbody>
                    {problems.map((p) => (
                      <tr key={p.name}>
                        <td>
                          <SelectBox>
                            <select aria-label={`Status of ${p.name}`}>
                              <option>Pending</option>
                              <option>Completed</option>
                              <option>Revision</option>
                            </select>
                            <ChevronDown size={12} />
                          </SelectBox>
                        </td>
                        <td><Problem>{p.link ? <a href="#">{p.name}</a> : p.name}</Problem></td>
                        <td>{p.ninja && <Ninja />}</td>
                        <td />
                        <td><LeetCode /></td>
                        <td><Notes /></td>
                        <td />
                      </tr>
                    ))}
                  </tbody>
                </Table>
              </TableWrap>

              <Step>
                <StepTitle><b>Step 5.2</b> : Medium String Problems</StepTitle>
                <StepBar>(0/8)</StepBar>
                <Toggle aria-label="Expand step 5.2"><Plus size={28} strokeWidth={2.4} /></Toggle>
              </Step>
              <NextCard />
            </Sheet>
            <Related><a href="#">Insert a Given Node in Binary Search Tree</a></Related>
          </Columns>
        </PageView>
        <Scrollbar aria-hidden="true">
          <ChevronUp size={12} strokeWidth={3} />
          <Space $grow={244} />
          <Thumb />
          <Space $grow={460} />
          <ChevronDown size={12} strokeWidth={3} />
        </Scrollbar>
      </Page>

      <Taskbar>
        <StartButton aria-label="Start"><WindowsLogo /></StartButton>
        <SearchBox>
          <Search size={21} strokeWidth={2} />
          <input type="search" placeholder="Search" aria-label="Search" />
          <Faces />
        </SearchBox>
        <AppButton aria-label="Copilot"><Copilot /></AppButton>
        <AppButton aria-label="Calculator"><Calculator /></AppButton>
        <AppButton aria-label="File Explorer"><Folder /></AppButton>
        <AppButton aria-label="Opera" $bg="#3b302d" $mark="#d49ae0" $wide><OperaLogo size={30} dark /></AppButton>
        <AppButton aria-label="Chrome"><Chrome /></AppButton>
        <AppButton aria-label="Security" $bg="#482b2c" $mark="#ff9aa5"><Defender /></AppButton>
        <AppButton aria-label="Visual Studio Code" $mark="#96938f"><VsCode /></AppButton>
        <Tray>
          <ChevronUp size={20} />
          <Lang><TrayText>{"ENG\nIN"}</TrayText></Lang>
          <TrayIcons>
            <Wifi />
            <Speaker />
            <Battery />
          </TrayIcons>
          <TrayText $right>{"16:09\n08-03-2024"}</TrayText>
          <BellSlot><Bell /></BellSlot>
        </Tray>
      </Taskbar>
    </Desktop>
  );
}
